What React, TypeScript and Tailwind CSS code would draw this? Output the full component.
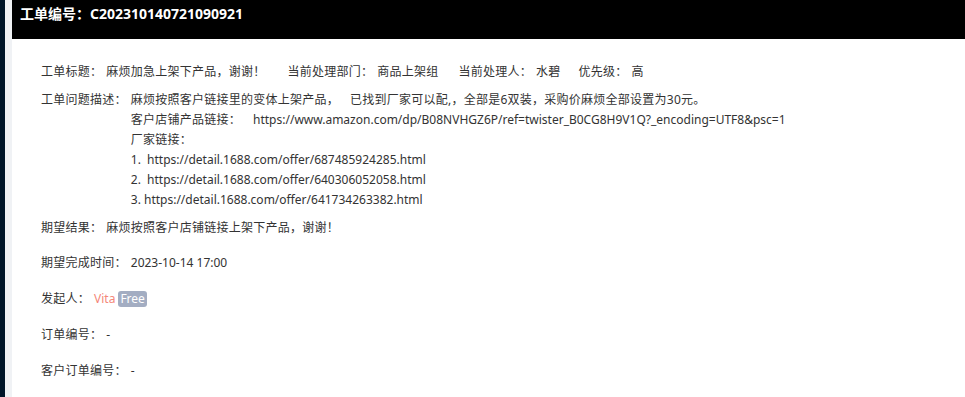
import React from "react";

const font = { fontFamily: '"Noto Sans", "Noto Sans CJK SC", sans-serif' };

function Label({ children }: { children: React.ReactNode }) {
  return <span className="shrink-0 mr-[4px]">{children}</span>;
}

export default function App() {
  return (
    <div className="flex w-[965px] h-[397px] overflow-hidden bg-white" style={font}>
      <div className="w-[5px] shrink-0 bg-[#001529]" />
      <div className="w-[7px] shrink-0 bg-[#f0f2f5]" />
      <div className="flex-1 flex flex-col">
        <div className="h-[39px] bg-black text-white text-[14px] font-bold leading-[18px] pt-[5px] pl-[8px]">
          工单编号：C202310140721090921
        </div>
        <div className="pl-[29px] pt-[23px] text-[12px] leading-[20px] tracking-[0.25px] text-[#333]">
          <div className="flex">
            <Label>工单标题：</Label>
            <span className="mr-[22px]">麻烦加急上架下产品，谢谢！</span>
            <Label>当前处理部门：</Label>
            <span className="mr-[20px]">商品上架组</span>
            <Label>当前处理人：</Label>
            <span className="mr-[18px]">水碧</span>
            <Label>优先级：</Label>
            <span>高</span>
          </div>
          <div className="flex mt-[8px]">
            <Label>工单问题描述：</Label>
            <div className="whitespace-pre">
              <div>
                <span>麻烦按照客户链接里的变体上架产品，</span>
                <span className="ml-[11px]">已找到厂家可以配,，全部是6双装，采购价麻烦全部设置为30元。</span>
              </div>
              <div>
                <span>客户店铺产品链接：</span>
                <span className="ml-[12px] tracking-normal">https://www.amazon.com/dp/B08NVHGZ6P/ref=twister_B0CG8H9V1Q?_encoding=UTF8&amp;psc=1</span>
              </div>
              <div>厂家链接：</div>
              <div className="tracking-normal">1.  https://detail.1688.com/offer/687485924285.html</div>
              <div className="tracking-normal">2.  https://detail.1688.com/offer/640306052058.html</div>
              <div className="tracking-normal">3. https://detail.1688.com/offer/641734263382.html</div>
            </div>
          </div>
          <div className="flex mt-[8px]">
            <Label>期望结果：</Label>
            <span>麻烦按照客户店铺链接上架下产品，谢谢！</span>
          </div>
          <div className="flex mt-[15px]">
            <Label>期望完成时间：</Label>
            <span className="tracking-normal">2023-10-14 17:00</span>
          </div>
          <div className="flex items-center mt-[16px]">
            <Label>发起人：</Label>
            <span className="text-[#f4877a] tracking-normal">Vita</span>
            <span className="ml-[3px] px-[2px] rounded-[3px] bg-[#a3adc2] text-white leading-[16px] tracking-normal">Free</span>
          </div>
          <div className="flex mt-[16px]">
            <Label>订单编号：</Label>
            <span>-</span>
          </div>
          <div className="flex mt-[16px]">
            <Label>客户订单编号：</Label>
            <span>-</span>
          </div>
        </div>
      </div>
    </div>
  );
}
